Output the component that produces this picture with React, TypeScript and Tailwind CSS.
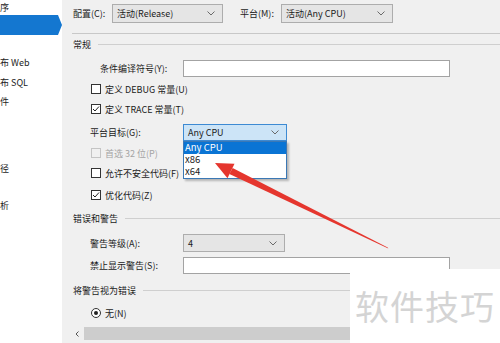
import React from "react";

function Chevron() {
	return (
		<svg width="8" height="5" viewBox="0 0 8 5" className="shrink-0">
			<path d="M0.5 0.5 L4 4 L7.5 0.5" fill="none" stroke="#6a6a6a" strokeWidth="1" />
		</svg>
	);
}

function Select({ value, className, active }: { value: string; className: string; active?: boolean }) {
	return (
		<div
			className={
				"flex items-center justify-between shrink-0 border px-[4px] pr-[7px] " +
				(active ? "bg-[#cce4f7] border-[#3d8ad3]" : "bg-[#e5e5e5] border-[#adadad]") +
				" " +
				className
			}
		>
			<span>{value}</span>
			<Chevron />
		</div>
	);
}

function Check({ checked, disabled }: { checked?: boolean; disabled?: boolean }) {
	return (
		<div
			className={
				"w-[10px] h-[10px] border shrink-0 flex items-center justify-center " +
				(disabled ? "border-[#c4c4c4] bg-[#f0f0f0]" : "border-[#333] bg-white")
			}
		>
			{checked && (
				<svg width="8" height="8" viewBox="0 0 8 8">
					<path d="M1 4 L3 6 L7 1.5" fill="none" stroke="#222" strokeWidth="1" />
				</svg>
			)}
		</div>
	);
}

function Header({ title }: { title: string }) {
	return (
		<div className="flex items-center pl-[11px] h-[20px]">
			<span>{title}</span>
			<div className="flex-1 h-px bg-[#cfcfcf] ml-[7px]" />
		</div>
	);
}

export default function App() {
	return (
		<div className="relative w-[500px] h-[343px] overflow-hidden flex font-['Noto_Sans_CJK_SC',sans-serif] text-[9px] text-[#1b1b1b] leading-none">
			{/* sidebar, only the right end of its labels is in view */}
			<div className="w-[62px] shrink-0 bg-white flex flex-col">
				<div className="h-[15px] flex items-center">序</div>
				<div className="h-[20px] flex items-center">
					<div className="w-[58px] h-full bg-[#1477d0]" />
					<div className="w-0 h-0 border-y-[10px] border-y-transparent border-l-[4px] border-l-[#1477d0]" />
				</div>
				<div className="h-[17px]" />
				<div className="h-[20px] flex items-center">布 Web</div>
				<div className="h-[20px] flex items-center">布 SQL</div>
				<div className="h-[18px] flex items-center">件</div>
				<div className="h-[48px]" />
				<div className="h-[20px] flex items-center">径</div>
				<div className="h-[17px]" />
				<div className="h-[20px] flex items-center">析</div>
			</div>

			{/* main panel */}
			<div className="flex-1 bg-[#f0f0f0] flex flex-col">
				<div className="h-[27px] flex items-center pl-[11px]">
					<span className="w-[39px] shrink-0">配置(C):</span>
					<Select value="活动(Release)" className="w-[111px] h-[19px]" />
					<span className="w-[41px] shrink-0 ml-[17px]">平台(M):</span>
					<Select value="活动(Any CPU)" className="w-[112px] h-[19px]" />
				</div>
				<div className="mt-[6px] h-px bg-[#c8c8c8] ml-[10px]" />

				<Header title="常规" />
				<div className="h-[29px] flex items-center pl-[38px]">
					<span className="w-[83px] shrink-0">条件编译符号(Y):</span>
					<div className="w-[267px] h-[17px] bg-white border border-[#a3a3a3]" />
				</div>
				<div className="h-[12px] flex items-center pl-[29px] gap-[4px]">
					<Check />
					<span>定义 DEBUG 常量(U)</span>
				</div>
				<div className="h-[28px] flex items-center pl-[29px] gap-[4px]">
					<Check checked />
					<span>定义 TRACE 常量(T)</span>
				</div>
				<div className="h-[19px] flex items-center pl-[28px]">
					<span className="w-[93px] shrink-0">平台目标(G):</span>
					<div className="relative">
						<Select value="Any CPU" className="w-[104px] h-[17px]" active />
						<div className="absolute left-0 top-[17px] w-[104px] bg-white border border-[#3b78b5] shadow-[2px_2px_2px_rgba(0,0,0,0.25)] flex flex-col text-[9.5px]">
							<div className="h-[12px] flex items-center pl-[1px] bg-[#0a74d4] text-white">Any CPU</div>
							<div className="h-[12px] flex items-center pl-[1px]">x86</div>
							<div className="h-[12px] flex items-center pl-[1px]">x64</div>
						</div>
					</div>
				</div>
				<div className="h-[22px] flex items-center pl-[29px] gap-[4px] text-[#a4a4a4]">
					<Check disabled />
					<span>首选 32 位(P)</span>
				</div>
				<div className="h-[18px] flex items-center pl-[29px] gap-[4px]">
					<Check />
					<span>允许不安全代码(F)</span>
				</div>
				<div className="h-[26px] flex items-center pl-[29px] gap-[4px]">
					<Check checked />
					<span>优化代码(Z)</span>
				</div>

				<Header title="错误和警告" />
				<div className="h-[30px] flex items-center pl-[28px]">
					<span className="w-[93px] shrink-0">警告等级(A):</span>
					<Select value="4" className="w-[102px] h-[18px]" />
				</div>
				<div className="h-[15px] flex items-center pl-[28px]">
					<span className="w-[93px] shrink-0">禁止显示警告(S):</span>
					<div className="w-[267px] h-[17px] shrink-0 bg-white border border-[#a3a3a3]" />
				</div>

				<div className="h-[34px] flex items-center pl-[11px]">
					<span>将警告视为错误</span>
					<div className="flex-1 h-px bg-[#cfcfcf] ml-[7px]" />
				</div>
				<div className="h-[12px] flex items-center pl-[29px] gap-[4px]">
					<div className="w-[10px] h-[10px] rounded-full border border-[#333] bg-white flex items-center justify-center">
						<div className="w-[4px] h-[4px] rounded-full bg-[#222]" />
					</div>
					<span>无(N)</span>
				</div>
				<div className="mt-[8px] h-[13px] flex items-center pl-[13px]">
					<svg width="4" height="6" viewBox="0 0 4 6" className="shrink-0">
						<path d="M3.5 0.5 L1 3 L3.5 5.5" fill="none" stroke="#555" strokeWidth="1" />
					</svg>
					<div className="flex-1 h-full bg-[#cdcdcd] ml-[5px]" />
				</div>
			</div>

			{/* red annotation arrow */}
			<svg className="absolute left-0 top-0 pointer-events-none" width="500" height="343" viewBox="0 0 500 343">
				<polygon points="215,163 234.5,163.8 227.5,178.2" fill="#e5362e" />
				<polygon points="232.6,168 229.4,174 388.3,248.4 387.7,247.6" fill="#e5362e" />
			</svg>

			{/* watermark */}
			<div className="absolute right-0 bottom-0 w-[150px] h-[74px] bg-white flex items-center justify-center text-[34px] text-[#d4d4d4] tracking-[1px]">
				软件技巧
			</div>
		</div>
	);
}
